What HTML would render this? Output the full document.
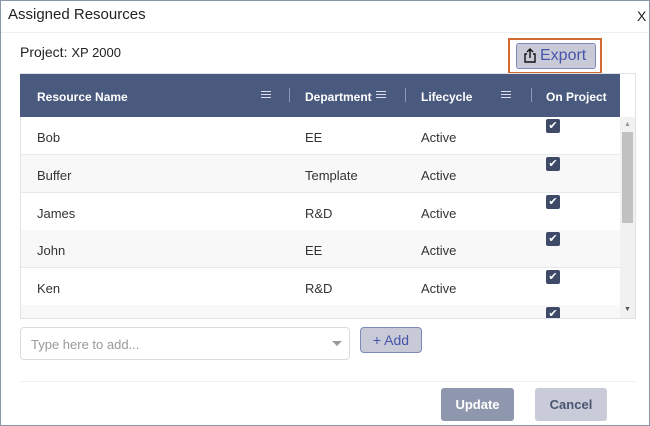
<!DOCTYPE html>
<html><head><style>
*{box-sizing:border-box;margin:0;padding:0}
body{width:650px;height:426px;background:#fff;font-family:"Liberation Sans",sans-serif;position:relative;overflow:hidden}
.frame{position:absolute;left:0;top:0;width:650px;height:426px;border:1px solid #8a96a8}
.abs{position:absolute}
.title{left:8px;top:6px;font-size:15px;color:#222}
.x{left:637px;top:8px;font-size:14px;color:#222}
.hdr{left:20px;top:74px;width:600px;height:43px;background:#4a5a7e;color:#fff;font-weight:bold;font-size:12px}
.hdr span{position:absolute;top:16px}
.sep{position:absolute;top:14px;width:1px;height:14px;background:#8b98b5}
.menu{position:absolute;top:17px;width:10px;height:7px;border-top:1.5px solid #dde;border-bottom:1.5px solid #dde}
.menu:after{content:"";position:absolute;left:0;top:1.5px;width:10px;height:1.5px;background:#dde}
.row{position:absolute;left:21px;width:599px;height:38px;border-bottom:1px solid #e6e9ee;font-size:13px;color:#333}
.row span{position:absolute;top:13px}
.cb{position:absolute;left:525px;top:2px;width:14px;height:14px;background:#3f4a68;border-radius:2px;color:#fff;font-size:11px;text-align:center;line-height:14px}
</style></head><body>
<div class="frame"></div>
<div class="abs title">Assigned Resources</div>
<div class="abs x">X</div>
<div class="abs" style="left:1px;top:32px;width:648px;height:1px;background:#eef0f3"></div>
<div class="abs" style="left:20px;top:44px;font-size:14px;color:#222">Project: <span style="font-size:13px">XP 2000</span></div>
<div class="abs" style="left:508px;top:38px;width:94px;height:36px;border:2px solid #d2692f"></div>
<div class="abs" style="left:516px;top:43px;width:80px;height:26px;background:#c8cad8;border:1px solid #7d88b8;border-radius:3px;color:#4755a8;font-size:16px;line-height:24px;padding-left:23px">Export</div>
<svg class="abs" style="left:523px;top:48px" width="14" height="15" viewBox="0 0 14 15"><path d="M4 6H2v8h10V6h-2M7 10V1M4 4l3-3 3 3" fill="none" stroke="#111" stroke-width="1.4"/></svg>
<div class="abs" style="left:20px;top:73px;width:616px;height:246px;border:1px solid #dde1e8"></div>
<div class="abs hdr">
<span style="left:17px">Resource Name</span><div class="menu" style="left:241px"></div><div class="sep" style="left:269px"></div>
<span style="left:285px">Department</span><div class="menu" style="left:356px"></div><div class="sep" style="left:385px"></div>
<span style="left:401px">Lifecycle</span><div class="menu" style="left:481px"></div><div class="sep" style="left:511px"></div>
<span style="left:526px">On Project</span>
</div>
<div class="row" style="top:117px;background:#fff"><span style="left:16px">Bob</span><span style="left:284px">EE</span><span style="left:400px">Active</span><div class="cb">✔</div></div>
<div class="row" style="top:155px;background:#f8f8f9"><span style="left:16px">Buffer</span><span style="left:284px">Template</span><span style="left:400px">Active</span><div class="cb">✔</div></div>
<div class="row" style="top:193px;background:#fff"><span style="left:16px">James</span><span style="left:284px">R&amp;D</span><span style="left:400px">Active</span><div class="cb">✔</div></div>
<div class="row" style="top:230px;background:#f8f8f9"><span style="left:16px">John</span><span style="left:284px">EE</span><span style="left:400px">Active</span><div class="cb">✔</div></div>
<div class="row" style="top:268px;background:#fff"><span style="left:16px">Ken</span><span style="left:284px">R&amp;D</span><span style="left:400px">Active</span><div class="cb">✔</div></div>
<div class="row" style="top:305px;height:13px;background:#f8f8f9;border:none;overflow:hidden"><div class="cb">✔</div></div>
<div class="abs" style="left:620px;top:117px;width:15px;height:201px;background:#f1f1f1"></div>
<div class="abs" style="left:622px;top:132px;width:11px;height:91px;background:#c1c1c1"></div>
<div class="abs" style="left:624px;top:121px;font-size:7px;color:#999">▲</div>
<div class="abs" style="left:624px;top:306px;font-size:7px;color:#555">▼</div>
<div class="abs" style="left:20px;top:327px;width:330px;height:33px;border:1px solid #d8dbe0;border-radius:4px;font-size:13px;color:#999;padding:9px 10px">Type here to add...</div>
<div class="abs" style="left:332px;top:341px;width:0;height:0;border-left:5px solid transparent;border-right:5px solid transparent;border-top:5px solid #999"></div>
<div class="abs" style="left:360px;top:327px;width:62px;height:26px;background:#c8cad8;border:1px solid #7d88b8;border-radius:4px;color:#4755a8;font-size:14px;text-align:center;line-height:24px">+ Add</div>
<div class="abs" style="left:20px;top:381px;width:616px;height:1px;background:#eef0f3"></div>
<div class="abs" style="left:441px;top:388px;width:73px;height:33px;background:#8e97ad;border-radius:3px;color:#fff;font-weight:bold;font-size:13px;text-align:center;line-height:33px">Update</div>
<div class="abs" style="left:535px;top:388px;width:72px;height:33px;background:#c9ccd8;border-radius:3px;color:#4a5570;font-weight:bold;font-size:13px;text-align:center;line-height:33px">Cancel</div>
</body></html>
